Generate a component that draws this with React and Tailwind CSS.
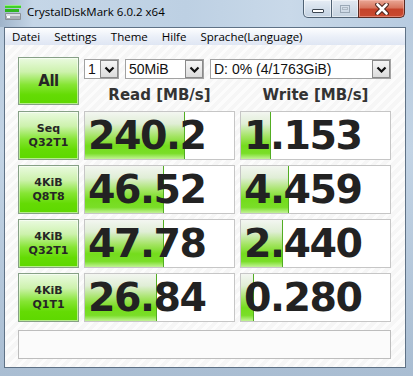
import React from 'react'

const ROWS = [
  { l1:'Seq',  l2:'Q32T1', read:'240.2', rp:67, write:'1.153', wp:20 },
  { l1:'4KiB', l2:'Q8T8',  read:'46.52', rp:53, write:'4.459', wp:32 },
  { l1:'4KiB', l2:'Q32T1', read:'47.78', rp:53, write:'2.440', wp:28 },
  { l1:'4KiB', l2:'Q1T1',  read:'26.84', rp:48, write:'0.280', wp:9 },
]

const MENU = ['Datei', 'Settings', 'Theme', 'Hilfe', 'Sprache(Language)']

function AppIcon() {
  return (
    <svg width="16" height="15" viewBox="0 0 16 15" className="flex-shrink-0">
      <rect x="0" y="0" width="16" height="3" fill="#3fcf2a" />
      <rect x="0" y="0" width="16" height="1" fill="#8ff07a" />
      <rect x="0" y="4" width="14" height="3" fill="#2fb61e" />
      <rect x="0" y="8" width="16" height="7" rx="1" fill="#8a9096" />
      <rect x="1" y="9" width="14" height="2" fill="#d9dde0" />
      <rect x="1" y="11" width="14" height="3" fill="#a9afb4" />
      <rect x="2" y="11" width="3" height="2" fill="#ffffff" />
    </svg>
  )
}

function Chevron() {
  return (
    <svg width="11" height="7" viewBox="0 0 11 7">
      <path d="M1.5 1.5 L5.5 5.5 L9.5 1.5" fill="none" stroke="#101010" strokeWidth="2.2" />
    </svg>
  )
}

function CloseX() {
  return (
    <svg width="14" height="12" viewBox="0 0 14 12">
      <path d="M2.5 1.5 L11.5 10.5 M11.5 1.5 L2.5 10.5" stroke="#47211a" strokeWidth="4.6" strokeLinecap="round" />
      <path d="M2.5 1.5 L11.5 10.5 M11.5 1.5 L2.5 10.5" stroke="#ffffff" strokeWidth="2.6" strokeLinecap="round" />
    </svg>
  )
}

function Select({ value, w }) {
  return (
    <div className={`${w} h-[20px] bg-white border border-[#a2a2a2] flex items-center`}>
      <span className="flex-1 pl-[3px] text-[14px] leading-none text-[#111] font-['Liberation_Sans',sans-serif] whitespace-nowrap overflow-hidden">{value}</span>
      <div className="w-[18px] h-[18px] border border-[#8a8a8a] bg-gradient-to-b from-[#f6f6f6] to-[#dcdcdc] flex items-center justify-center">
        <Chevron />
      </div>
    </div>
  )
}

function GreenButton({ children, h }) {
  return (
    <div className={`${h} border border-[#86a086] shadow-[inset_0_0_0_1px_rgba(255,255,255,0.55)] bg-[linear-gradient(to_bottom,#eafae0_0%,#cdf2ad_30%,#86e534_58%,#64db04_80%,#5ed800_100%)] flex flex-col items-center justify-center text-[#262626] font-bold font-['DejaVu_Sans',sans-serif]`}>
      {children}
    </div>
  )
}

function Value({ text, pct }) {
  return (
    <div className="relative h-[49px] bg-white border border-[#c6c6c6] overflow-hidden flex items-center">
      <div
        className="absolute inset-y-0 left-0 border-r border-[#52ad22] bg-[linear-gradient(to_bottom,#f3f6f1_0%,#e0eed6_25%,#a3e462_52%,#74dc1c_72%,#7ade28_88%,#c2f297_100%)]"
        style={{ width: `${pct}%` }}
      />
      <span className="relative pl-[3px] text-[39.5px] leading-none font-bold tracking-[-1.5px] text-[#222] font-['DejaVu_Sans',sans-serif]">{text}</span>
    </div>
  )
}

export default function App() {
  return (
    <div className="w-[413px] h-[376px] overflow-hidden flex flex-col bg-[linear-gradient(to_bottom,#b6c9dc_0%,#c3d4e5_40%,#a9bdd2_100%)] font-['Open_Sans',sans-serif]">
      {/* Title bar */}
      <div className="h-[27px] flex items-start flex-shrink-0 bg-[linear-gradient(to_right,#9fb4ca_0%,#c5d6e7_8%,#bdd0e3_45%,#c9d9e9_70%,#b7cbe0_100%)]">
        <div className="pl-[5px] pt-[5px]"><AppIcon /></div>
        <div className="pl-[6px] pt-[4px] text-[11.5px] leading-[16px] text-black whitespace-nowrap">CrystalDiskMark 6.0.2 x64</div>
        <div className="flex-1" />
        <div className="mr-[8px] flex h-[18px]">
          <div className="w-[29px] h-full border border-[#4f6274] border-t-0 rounded-bl-[5px] bg-gradient-to-b from-[#e6edf5] to-[#c2d1e1] flex items-center justify-center shadow-[inset_0_0_0_1px_rgba(255,255,255,0.5)]">
            <div className="w-[12px] h-[4px] mt-[5px] bg-white border border-[#3c4652] rounded-[1px]" />
          </div>
          <div className="w-[26px] h-full border-b border-[#4f6274] bg-gradient-to-b from-[#e2e9f1] to-[#c4d2e0] flex items-center justify-center shadow-[inset_0_0_0_1px_rgba(255,255,255,0.5)]">
            <div className="w-[10px] h-[8px] border border-[#9aa8b6] flex items-center justify-center">
              <div className="w-[6px] h-[3px] border border-[#aeb9c4]" />
            </div>
          </div>
          <div className="w-[47px] h-full border border-[#5a2a22] border-t-0 rounded-br-[5px] bg-[linear-gradient(to_bottom,#e9a795_0%,#d8765f_45%,#c5432a_55%,#c94a30_100%)] flex items-center justify-center shadow-[inset_0_0_0_1px_rgba(255,200,190,0.45)]">
            <CloseX />
          </div>
        </div>
      </div>

      {/* Client area */}
      <div className="flex-1 ml-[4px] mr-[7px] mb-[8px] border border-[#5f7286] flex flex-col min-h-0">
        <div className="h-[17px] flex items-center flex-shrink-0 border-t border-white bg-[linear-gradient(to_bottom,#fbfcfe_0%,#eaeff8_50%,#dfe6f3_100%)]">
          {MENU.map(m => (
            <span key={m} className="px-[7px] text-[11.5px] leading-none text-black whitespace-nowrap">{m}</span>
          ))}
        </div>

        <div className="flex-1 pl-[13px] pt-[12px] bg-[repeating-linear-gradient(135deg,#f6f6f6_0px,#f6f6f6_4px,#fcfcfc_4px,#fcfcfc_7px)]">
          {/* Top row */}
          <div className="flex gap-[5px] h-[48px]">
            <div className="w-[61px]">
              <GreenButton h="h-[48px]">
                <span className="text-[15px] leading-none tracking-[-0.5px]">All</span>
              </GreenButton>
            </div>
            <div className="w-[307px] flex flex-col">
              <div className="flex gap-[6px] mt-[2px]">
                <Select value="1" w="w-[35px]" />
                <Select value="50MiB" w="w-[79px]" />
                <Select value="D: 0% (4/1763GiB)" w="w-[181px]" />
              </div>
              <div className="flex gap-[5px] mt-[6px]">
                <div className="w-[151px] text-center text-[15px] leading-[20px] font-bold text-[#333] font-['DejaVu_Sans',sans-serif]">Read [MB/s]</div>
                <div className="w-[151px] text-center text-[15px] leading-[20px] font-bold text-[#333] font-['DejaVu_Sans',sans-serif]">Write [MB/s]</div>
              </div>
            </div>
          </div>

          {/* Result rows */}
          <div className="flex flex-col gap-[5px] mt-[6px]">
            {ROWS.map((r, i) => (
              <div key={i} className="flex gap-[5px]">
                <div className="w-[61px]">
                  <GreenButton h="h-[49px]">
                    <span className="text-[11px] leading-[14px]">{r.l1}</span>
                    <span className="text-[11px] leading-[14px]">{r.l2}</span>
                  </GreenButton>
                </div>
                <div className="w-[151px]"><Value text={r.read} pct={r.rp} /></div>
                <div className="w-[151px]"><Value text={r.write} pct={r.wp} /></div>
              </div>
            ))}
          </div>

          {/* Status bar */}
          <div className="mt-[8px] w-[373px] h-[29px] border border-[#bdbdbd] bg-[#fbfbfb]" />
        </div>
      </div>
    </div>
  )
}
